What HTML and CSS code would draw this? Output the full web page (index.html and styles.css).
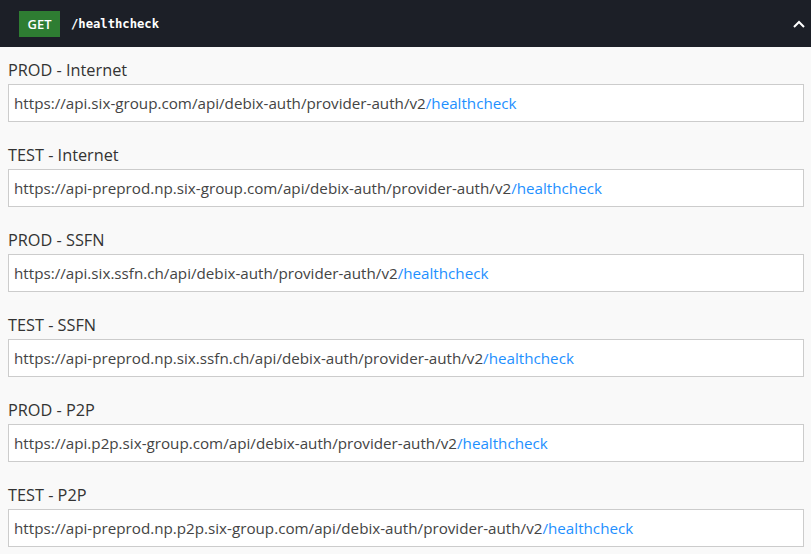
FILE: index.html
```html
<!DOCTYPE html>
<html>
<head>
<meta charset="utf-8">
<link rel="stylesheet" href="styles.css">
</head>
<body>
<header class="opblock-summary">
  <span class="method">GET</span>
  <span class="path">/healthcheck</span>
  <svg class="chevron" width="12" height="8" viewBox="0 0 12 8"><path d="M1 7 L6 2 L11 7" fill="none" stroke="#fff" stroke-width="2"/></svg>
</header>
<main class="servers">
  <div class="server">
    <div class="label">PROD - Internet</div>
    <div class="url">https://api.six-group.com/api/debix-auth/provider-auth/v2<span class="ep">/healthcheck</span></div>
  </div>
  <div class="server">
    <div class="label">TEST - Internet</div>
    <div class="url">https://api-preprod.np.six-group.com/api/debix-auth/provider-auth/v2<span class="ep">/healthcheck</span></div>
  </div>
  <div class="server">
    <div class="label">PROD - SSFN</div>
    <div class="url">https://api.six.ssfn.ch/api/debix-auth/provider-auth/v2<span class="ep">/healthcheck</span></div>
  </div>
  <div class="server">
    <div class="label">TEST - SSFN</div>
    <div class="url">https://api-preprod.np.six.ssfn.ch/api/debix-auth/provider-auth/v2<span class="ep">/healthcheck</span></div>
  </div>
  <div class="server">
    <div class="label">PROD - P2P</div>
    <div class="url">https://api.p2p.six-group.com/api/debix-auth/provider-auth/v2<span class="ep">/healthcheck</span></div>
  </div>
  <div class="server">
    <div class="label">TEST - P2P</div>
    <div class="url">https://api-preprod.np.p2p.six-group.com/api/debix-auth/provider-auth/v2<span class="ep">/healthcheck</span></div>
  </div>
</main>
</body>
</html>
```
FILE: styles.css
```css
html, body {
  margin: 0;
  padding: 0;
}
body {
  background: #f9f9f9;
  font-family: "Open Sans", "Noto Sans", sans-serif;
  width: 811px;
  height: 554px;
  overflow: hidden;
}
.opblock-summary {
  height: 47px;
  background: #1c1f27;
  display: flex;
  align-items: center;
  padding: 0 6px 0 19px;
  box-sizing: border-box;
}
.method {
  width: 41px;
  height: 26px;
  background: #2e7d32;
  color: #fff;
  font-family: "Open Sans", sans-serif;
  font-size: 13px;
  font-weight: 600;
  display: flex;
  align-items: center;
  justify-content: center;
  margin-top: 1px;
}
.path {
  margin-left: 11px;
  color: #fff;
  font-family: "DejaVu Sans Mono", monospace;
  font-weight: bold;
  font-size: 12.2px;
  flex: 1;
}
.chevron {
  display: block;
}
.servers {
  padding: 13px 7px 0 8px;
  display: flex;
  flex-direction: column;
  gap: 23px;
}
.label {
  font-size: 16.3px;
  line-height: 20px;
  padding-bottom: 4px;
  color: #333;
}
.url {
  background: #fff;
  border: 1px solid #cccccc;
  height: 38px;
  box-sizing: border-box;
  padding: 0 5px;
  display: flex;
  align-items: center;
  font-size: 15.2px;
  color: #444;
}
.ep {
  color: #1e90ff;
}
```
